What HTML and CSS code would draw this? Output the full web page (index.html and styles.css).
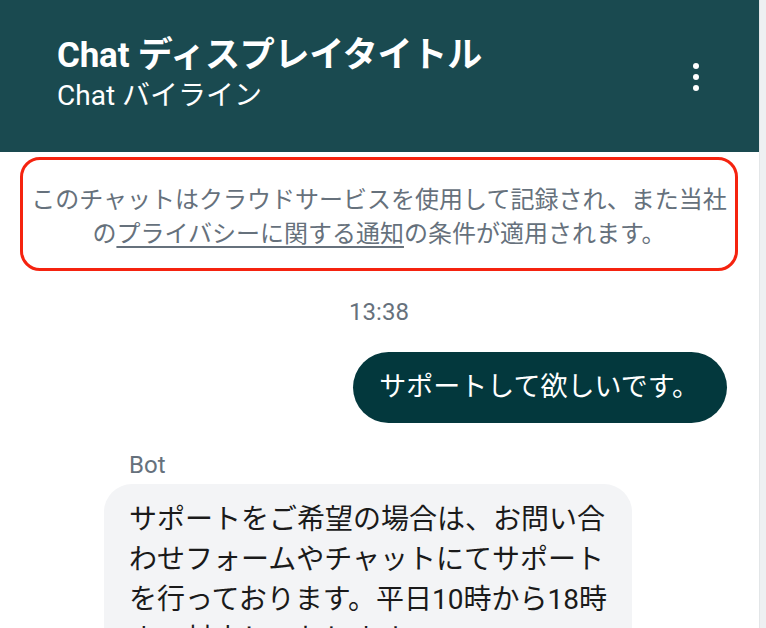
FILE: index.html
```html
<!DOCTYPE html>
<html lang="ja">
<head>
<meta charset="utf-8">
<title>Chat</title>
<link rel="stylesheet" href="styles.css">
</head>
<body>
<div class="app">
  <div class="chat">
    <header class="header">
      <div class="titles">
        <div class="title">Chat ディスプレイタイトル</div>
        <div class="byline">Chat バイライン</div>
      </div>
      <button class="menu" aria-label="メニュー">
        <svg width="12" height="32" viewBox="0 0 12 32"><circle cx="6" cy="5" r="3" fill="#fff"/><circle cx="6" cy="16" r="3" fill="#fff"/><circle cx="6" cy="27" r="3" fill="#fff"/></svg>
      </button>
    </header>
    <main class="body">
      <div class="notice">このチャットはクラウドサービスを使用して記録され、また当社の<a class="link" href="#">プライバシーに関する通知</a>の条件が適用されます。</div>
      <div class="time">13:38</div>
      <div class="row row-user">
        <div class="bubble bubble-user">サポートして欲しいです。</div>
      </div>
      <div class="row row-bot">
        <div class="sender">Bot</div>
        <div class="bubble bubble-bot">サポートをご希望の場合は、お問い合わせフォームやチャットにてサポートを行っております。平日10時から18時まで対応しております。</div>
      </div>
    </main>
  </div>
  <div class="scrollbar"></div>
</div>
</body>
</html>
```

FILE: styles.css
```css
html, body {
  margin: 0;
  padding: 0;
  background: #ffffff;
  overflow: hidden;
}
body {
  font-family: Roboto, "Noto Sans CJK JP", sans-serif;
  width: 766px;
  height: 628px;
}
.app {
  display: flex;
  height: 628px;
}
.chat {
  flex: 1;
  display: flex;
  flex-direction: column;
  min-width: 0;
}
.scrollbar {
  width: 6px;
  background: #eef0f2;
  border-left: 1px solid #e3e6e8;
}
.header {
  height: 152px;
  background: #1a4a50;
  color: #ffffff;
  display: flex;
  align-items: center;
  justify-content: space-between;
  padding: 0 57px 0 57px;
  box-sizing: border-box;
  flex-shrink: 0;
}
.titles {
  display: flex;
  flex-direction: column;
  margin-top: -2px;
}
.title {
  font-size: 35px;
  font-weight: 700;
  line-height: 42px;
  letter-spacing: -0.2px;
}
.byline {
  font-size: 28px;
  font-weight: 400;
  line-height: 38px;
}
.menu {
  background: none;
  border: 0;
  padding: 0;
  display: flex;
  margin-top: 2px;
}
.body {
  flex: 1;
  display: flex;
  flex-direction: column;
  padding: 5px 21px 0 20px;
  overflow: hidden;
}
.notice {
  border: 3px solid #f5230f;
  border-radius: 20px;
  padding: 23px 0 17px 0;
  text-align: center;
  color: #66717c;
  font-size: 24px;
  line-height: 34px;
}
.link {
  color: #66717c;
  text-decoration: underline;
  text-underline-offset: 4px;
  text-decoration-thickness: 1.5px;
}
.time {
  text-align: center;
  color: #66717c;
  font-size: 24px;
  line-height: 26px;
  margin-top: 28px;
}
.row {
  display: flex;
  flex-direction: column;
}
.row-user {
  align-items: flex-end;
  margin-top: 27px;
  padding-right: 11px;
}
.bubble {
  box-sizing: border-box;
}
.bubble-user {
  background: #03383d;
  color: #ffffff;
  font-size: 27px;
  line-height: 35px;
  padding: 18px 28px 18px 26px;
  border-radius: 36px;
}
.row-bot {
  align-items: flex-start;
  margin-top: 29px;
  padding-left: 84px;
}
.sender {
  color: #66717c;
  font-size: 24px;
  line-height: 26px;
  padding-left: 25px;
  margin-bottom: 6px;
}
.bubble-bot {
  background: #f3f4f6;
  color: #1a1a1a;
  font-size: 28px;
  line-height: 40px;
  width: 528px;
  padding: 16px 18px 24px 25px;
  border-radius: 28px;
}
```
